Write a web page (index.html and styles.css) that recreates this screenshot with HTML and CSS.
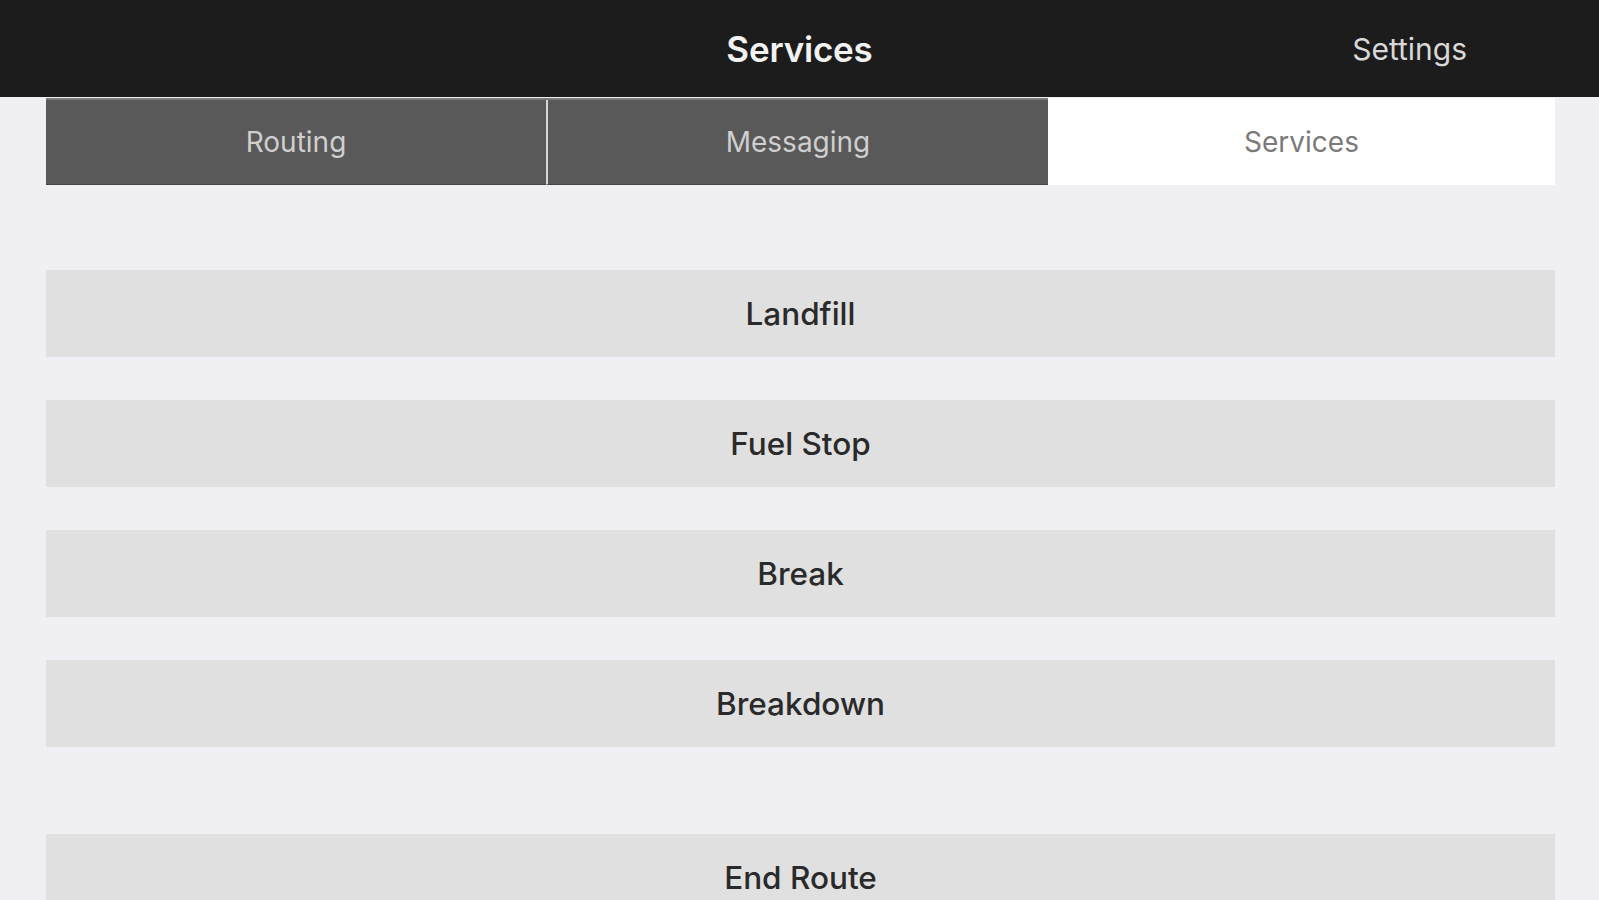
FILE: index.html
```html
<!DOCTYPE html>
<html lang="en">
<head>
<meta charset="utf-8">
<title>Services</title>
<link rel="stylesheet" href="styles.css">
</head>
<body>
<header class="navbar">
  <div class="nav-left"></div>
  <h1 class="nav-title">Services</h1>
  <div class="nav-right"><span class="nav-action">Settings</span></div>
</header>
<nav class="tabs">
  <div class="tab">Routing</div>
  <div class="tab tab-divided">Messaging</div>
  <div class="tab tab-active">Services</div>
</nav>
<main class="list">
  <div class="btn">Landfill</div>
  <div class="btn">Fuel Stop</div>
  <div class="btn">Break</div>
  <div class="btn">Breakdown</div>
  <div class="btn btn-end">End Route</div>
</main>
</body>
</html>
```
FILE: styles.css
```css
* { box-sizing: border-box; }
html, body { margin: 0; padding: 0; }
body {
  background: #efeff4;
  font-family: Inter, "Liberation Sans", sans-serif;
  width: 1599px;
  height: 900px;
  overflow: hidden;
}
.navbar {
  height: 97px;
  background: #1c1c1c;
  display: grid;
  grid-template-columns: 1fr auto 1fr;
  align-items: center;
}
.nav-title {
  margin: 0;
  color: #f2f2f2;
  font-size: 35px;
  font-weight: 600;
  letter-spacing: -0.2px;
}
.nav-right {
  display: flex;
  justify-content: flex-end;
  padding-right: 132px;
}
.nav-action {
  color: #d8d8d8;
  font-size: 30px;
  font-weight: 400;
}
.tabs {
  display: grid;
  grid-template-columns: 500px 502px 1fr;
  margin: 1px 44px 0 46px;
  height: 87px;
  background: #595959;
  border-top: 2px solid #7a7a7a;
}
.tab {
  display: flex;
  align-items: center;
  justify-content: center;
  color: #cfcfcf;
  font-size: 28px;
  background: #595959;
  border-bottom: 1px solid #444;
}
.tab-divided {
  border-left: 2px solid #d6d6d6;
}
.tab-active {
  background: #ffffff;
  color: #7a7a7a;
  border-bottom: none;
  margin-top: -2px;
}
.list {
  display: flex;
  flex-direction: column;
  gap: 43px;
  margin: 85px 44px 0 46px;
}
.btn {
  height: 87px;
  background: #e0e0e0;
  display: flex;
  align-items: center;
  justify-content: center;
  color: #2a2a2a;
  font-size: 31.5px;
  font-weight: 500;
}
.btn-end {
  margin-top: 44px;
}
```
